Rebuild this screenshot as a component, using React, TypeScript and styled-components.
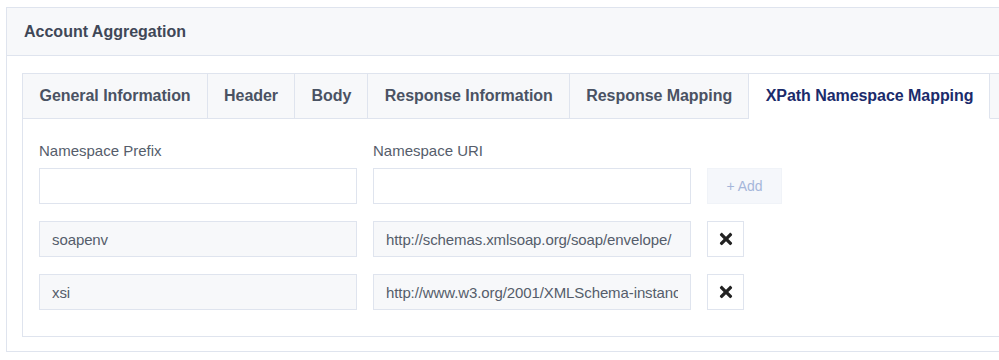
import React, { useState } from "react";
import styled, { createGlobalStyle } from "styled-components";
import { FaTimes } from "react-icons/fa";

const borderColor = "#dfe4ee";
const mutedBg = "#f7f8fa";

const GlobalStyle = createGlobalStyle`
  html, body {
    margin: 0;
    padding: 0;
    background: #fff;
    overflow: hidden;
  }
  body {
    font-family: "Liberation Sans", Arial, sans-serif;
  }
`;

const Page = styled.div`
  padding: 7px 0 0 6px;
`;

const Card = styled.div`
  width: 1100px;
  border: 1px solid ${borderColor};
  background: #fff;
`;

const CardHeader = styled.div`
  height: 47px;
  display: flex;
  align-items: center;
  padding-left: 17px;
  background: ${mutedBg};
  border-bottom: 1px solid ${borderColor};
  h2 {
    margin: 0;
    font-size: 16px;
    font-weight: bold;
    color: #3f4757;
  }
`;

const CardBody = styled.div`
  padding: 17px 0 14px 15px;
`;

const TabPanel = styled.div`
  border: 1px solid ${borderColor};
`;

const TabList = styled.div`
  display: flex;
`;

const Tab = styled.div<{ $active?: boolean }>`
  height: 44px;
  display: flex;
  align-items: center;
  padding: 0 16px 0 16.5px;
  font-size: 16px;
  font-weight: bold;
  white-space: nowrap;
  letter-spacing: -0.05px;
  color: ${(p) => (p.$active ? "#1b2b6b" : "#4a5263")};
  background: ${(p) => (p.$active ? "#fff" : mutedBg)};
  border-right: 1px solid ${borderColor};
  border-bottom: 1px solid ${(p) => (p.$active ? "transparent" : borderColor)};
  cursor: pointer;
`;

const TabFill = styled.div`
  flex: 1;
  background: ${mutedBg};
  border-bottom: 1px solid ${borderColor};
`;

const Content = styled.div`
  padding: 23px 16px 26px;
`;

const Grid = styled.div`
  display: grid;
  grid-template-columns: 318px 318px auto;
  column-gap: 16px;
  row-gap: 17px;
  align-items: center;
`;

const Label = styled.label`
  font-size: 15px;
  color: #555d6b;
  margin-bottom: -8px;
`;

const Input = styled.input<{ $readonly?: boolean }>`
  box-sizing: border-box;
  width: 318px;
  height: 36px;
  padding: 0 12px;
  font-family: "Liberation Sans", Arial, sans-serif;
  font-size: 15px;
  letter-spacing: -0.1px;
  color: #555d6b;
  background: ${(p) => (p.$readonly ? mutedBg : "#fff")};
  border: 1px solid ${borderColor};
  outline: none;
`;

const AddButton = styled.button`
  width: 75px;
  height: 36px;
  font-family: "Liberation Sans", Arial, sans-serif;
  font-size: 14px;
  color: #a5b6da;
  background: #f5f7fb;
  border: 1px solid #f0f3f8;
  justify-self: start;
`;

const RemoveButton = styled.button`
  width: 37px;
  height: 36px;
  display: flex;
  align-items: center;
  justify-content: center;
  padding: 0;
  background: #fff;
  border: 1px solid ${borderColor};
  color: #222;
  justify-self: start;
  cursor: pointer;
`;

const tabs = [
  "General Information",
  "Header",
  "Body",
  "Response Information",
  "Response Mapping",
  "XPath Namespace Mapping",
];

const App = () => {
  const [active, setActive] = useState(5);
  const [rows, setRows] = useState([
    { prefix: "soapenv", uri: "http://schemas.xmlsoap.org/soap/envelope/" },
    { prefix: "xsi", uri: "http://www.w3.org/2001/XMLSchema-instance" },
  ]);

  return (
    <>
      <GlobalStyle />
      <Page>
        <Card>
          <CardHeader>
            <h2>Account Aggregation</h2>
          </CardHeader>
          <CardBody>
            <TabPanel>
              <TabList>
                {tabs.map((t, i) => (
                  <Tab key={t} $active={i === active} onClick={() => setActive(i)}>
                    {t}
                  </Tab>
                ))}
                <TabFill />
              </TabList>
              <Content>
                <Grid>
                  <Label>Namespace Prefix</Label>
                  <Label>Namespace URI</Label>
                  <div />
                  <Input />
                  <Input />
                  <AddButton disabled>+ Add</AddButton>
                  {rows.map((r, i) => (
                    <React.Fragment key={r.prefix}>
                      <Input $readonly readOnly value={r.prefix} />
                      <Input $readonly readOnly value={r.uri} />
                      <RemoveButton
                        onClick={() => setRows(rows.filter((_, j) => j !== i))}
                      >
                        <FaTimes size={18} />
                      </RemoveButton>
                    </React.Fragment>
                  ))}
                </Grid>
              </Content>
            </TabPanel>
          </CardBody>
        </Card>
      </Page>
    </>
  );
};

export default App;
